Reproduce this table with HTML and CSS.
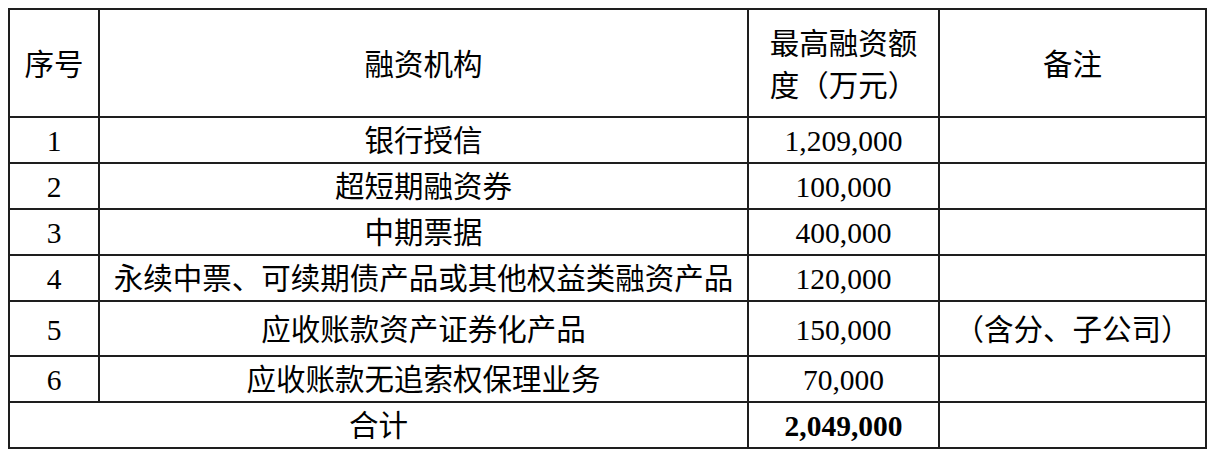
FILE: index.html
```html
<!DOCTYPE html>
<html lang="zh-CN">
<head>
<meta charset="utf-8">
<title>融资额度</title>
<link rel="stylesheet" href="styles.css">
</head>
<body>
<table class="grid">
  <colgroup>
    <col class="c-no">
    <col class="c-org">
    <col class="c-amt">
    <col class="c-note">
  </colgroup>
  <thead>
    <tr class="head">
      <th>序号</th>
      <th>融资机构</th>
      <th>最高融资额<br>度（万元）</th>
      <th>备注</th>
    </tr>
  </thead>
  <tbody>
    <tr><td>1</td><td>银行授信</td><td>1,209,000</td><td></td></tr>
    <tr><td>2</td><td>超短期融资券</td><td>100,000</td><td></td></tr>
    <tr><td>3</td><td>中期票据</td><td>400,000</td><td></td></tr>
    <tr><td>4</td><td>永续中票、可续期债产品或其他权益类融资产品</td><td>120,000</td><td></td></tr>
    <tr class="tall"><td>5</td><td>应收账款资产证券化产品</td><td>150,000</td><td>（含分、子公司）</td></tr>
    <tr><td>6</td><td>应收账款无追索权保理业务</td><td>70,000</td><td></td></tr>
    <tr class="total"><td colspan="2">合计</td><td class="bold">2,049,000</td><td></td></tr>
  </tbody>
</table>
</body>
</html>
```

FILE: styles.css
```css
html, body {
  background: #ffffff;
}
body {
  margin: 8px;
  font-family: "Liberation Serif", "Noto Sans CJK SC", serif;
  color: #000;
}
.grid {
  border-collapse: collapse;
  table-layout: fixed;
  width: 1199px;
  font-size: 29.5px;
}
.c-no { width: 90px; }
.c-org { width: 649px; }
.c-amt { width: 191px; }
.c-note { width: 267px; }
.grid th,
.grid td {
  border: 2px solid #1e1e1e;
  padding: 2px 0 0 0;
  text-align: center;
  vertical-align: middle;
  font-weight: normal;
  line-height: 40px;
  height: 42px;
}
.grid .head th {
  padding-top: 4px;
  height: 102px;
  line-height: 42px;
}
.grid .tall td {
  height: 51px;
}
.grid .bold {
  font-weight: bold;
}
```
